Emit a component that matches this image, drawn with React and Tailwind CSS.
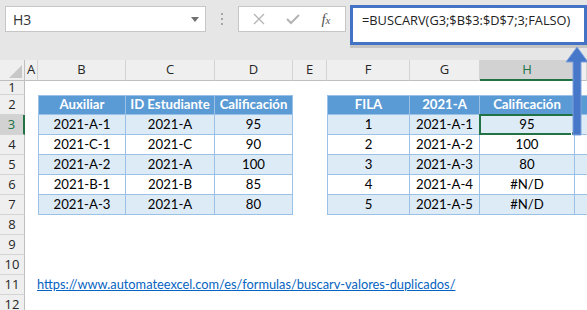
import React from 'react';

const cols = ['A', 'B', 'C', 'D', 'E', 'F', 'G', 'H', ''];

const left = [
  ['2021-A-1', '2021-A', '95'],
  ['2021-C-1', '2021-C', '90'],
  ['2021-A-2', '2021-A', '100'],
  ['2021-B-1', '2021-B', '85'],
  ['2021-A-3', '2021-A', '80'],
];

const right = [
  ['1', '2021-A-1', '95'],
  ['2', '2021-A-2', '100'],
  ['3', '2021-A-3', '80'],
  ['4', '2021-A-4', '#N/D'],
  ['5', '2021-A-5', '#N/D'],
];

const cellFont = { fontFamily: 'Lato, "Open Sans", sans-serif' };
const uiFont = { fontFamily: '"Open Sans", "Noto Sans", sans-serif' };

const RowHead = ({ n, active }) => (
  <div
    style={uiFont}
    className={`flex items-center justify-center text-[13px] border-b border-[#d4d4d4] ${
      active
        ? 'bg-[#d2d2d2] text-[#217346] border-r-2 border-r-[#217346]'
        : 'bg-[#efefef] text-[#262626] border-r border-r-[#bfbfbf]'
    }`}
  >
    {n}
  </div>
);

const Cell = ({ children, head, band, first, top, edge, selected }) => {
  let bg = 'bg-white';
  if (head) bg = 'bg-[#5b9bd5]';
  else if (band) bg = 'bg-[#ddebf7]';
  return (
    <div
      style={cellFont}
      className={`relative flex items-center justify-center whitespace-nowrap text-[13.2px] border-b border-[#9bc2e6] ${
        edge ? '' : 'border-r'
      } ${first ? 'border-l' : ''} ${top ? 'border-t' : ''} ${bg} ${
        head ? 'font-bold text-white' : 'text-black'
      }`}
    >
      {children}
      {selected && (
        <>
          <div className="absolute -left-px -top-px -right-px -bottom-px border-2 border-[#217346]" />
          <div className="absolute -right-[3px] -bottom-[3px] w-[6px] h-[6px] bg-[#217346] border border-white" />
        </>
      )}
    </div>
  );
};

const Empty = () => <div className="bg-white" />;

export default function App() {
  return (
    <div className="relative w-[587px] h-[310px] overflow-hidden bg-white">
      {/* formula bar area */}
      <div className="h-[60px] bg-[#e6e6e6] flex items-start pt-[5px] pl-[5px]">
        <div className="mt-px w-[201px] h-[26px] bg-white border border-[#c6c6c6] flex items-center justify-between pl-[7px] pr-[6px]">
          <span style={uiFont} className="text-[14px] text-[#333]">H3</span>
          <span className="w-0 h-0 border-l-[4px] border-r-[4px] border-t-[5px] border-l-transparent border-r-transparent border-t-[#707070]" />
        </div>
        <div className="w-[32px] h-[26px] mt-px flex flex-col items-center justify-center gap-[3px]">
          <span className="w-[2px] h-[2px] bg-[#a6a6a6]" />
          <span className="w-[2px] h-[2px] bg-[#a6a6a6]" />
          <span className="w-[2px] h-[2px] bg-[#a6a6a6]" />
        </div>
        <div className="mt-px w-[108px] h-[26px] bg-white border border-[#c6c6c6] flex items-center justify-around px-[4px]">
          <svg width="12" height="12" viewBox="0 0 12 12">
            <path d="M1 1 L11 11 M11 1 L1 11" stroke="#b4b4b4" strokeWidth="1.3" />
          </svg>
          <svg width="14" height="12" viewBox="0 0 14 12">
            <path d="M1 6 L5 10 L13 2" stroke="#b4b4b4" strokeWidth="2" fill="none" />
          </svg>
          <span className="italic text-[15px] text-[#555]" style={{ fontFamily: '"Liberation Serif", serif' }}>
            f<span className="text-[11px]">x</span>
          </span>
        </div>
        <div className="ml-[4px] flex-1 h-[40px] bg-white border-[3px] border-[#4472c4] shadow-[0_3px_0_#c4c4c4] flex items-start pt-[3px] pl-[9px]">
          <span style={uiFont} className="text-[12.8px] text-[#222] whitespace-nowrap">
            =BUSCARV(G3;$B$3:$D$7;3;FALSO)
          </span>
        </div>
      </div>

      {/* sheet */}
      <div className="grid grid-cols-[25px_13px_88px_89px_78px_34px_83px_70px_95px_1fr] grid-rows-[21px_14px_repeat(11,20px)]">
        {/* column headers */}
        <div className="bg-[#efefef] border-r border-b border-[#bfbfbf] flex items-end justify-end p-[2px]">
          <svg width="13" height="13" viewBox="0 0 13 13">
            <path d="M13 0 L13 13 L0 13 Z" fill="#c8c8c8" />
          </svg>
        </div>
        {cols.map((c, i) => (
          <div
            key={i}
            style={uiFont}
            className={`flex items-center justify-center text-[13px] ${
              c === 'H'
                ? 'bg-[#d2d2d2] text-[#217346] border-b-2 border-b-[#217346] border-r border-r-[#bfbfbf]'
                : 'bg-[#efefef] text-[#262626] border-b border-b-[#bfbfbf] border-r border-r-[#d4d4d4]'
            }`}
          >
            {c}
          </div>
        ))}

        {/* row 1 */}
        <RowHead n="1" />
        {cols.map((_, i) => <Empty key={i} />)}

        {/* row 2 headers */}
        <RowHead n="2" />
        <Empty />
        <Cell head first top>Auxiliar</Cell>
        <Cell head top>ID Estudiante</Cell>
        <Cell head top>Calificación</Cell>
        <Empty />
        <Cell head first top>FILA</Cell>
        <Cell head top>2021-A</Cell>
        <Cell head top>Calificación</Cell>
        <Cell head top edge />

        {left.map((row, r) => {
          const band = r % 2 === 0;
          return (
            <React.Fragment key={r}>
              <RowHead n={String(r + 3)} active={r === 0} />
              <Empty />
              <Cell band={band} first>{row[0]}</Cell>
              <Cell band={band}>{row[1]}</Cell>
              <Cell band={band}>{row[2]}</Cell>
              <Empty />
              <Cell band={band} first>{right[r][0]}</Cell>
              <Cell band={band}>{right[r][1]}</Cell>
              <Cell band={band} selected={r === 0}>{right[r][2]}</Cell>
              <Cell band={band} edge />
            </React.Fragment>
          );
        })}

        {[8, 9, 10, 11, 12].map((n) => (
          <React.Fragment key={n}>
            <RowHead n={String(n)} />
            <Empty />
            <div className="relative z-10 bg-white flex items-center">
              {n === 11 && (
                <a
                  href="#"
                  style={cellFont}
                  className="-ml-px text-[12.8px] text-[#0563c1] underline whitespace-nowrap"
                >
                  https://www.automateexcel.com/es/formulas/buscarv-valores-duplicados/
                </a>
              )}
            </div>
            {cols.slice(2).map((_, i) => <Empty key={i} />)}
          </React.Fragment>
        ))}
      </div>

      {/* arrow annotation */}
      <svg className="absolute left-[564px] top-[46px]" width="26" height="92" viewBox="0 0 26 92">
        <path
          d="M13 1 L24 16 L17 16 L17 89 L9 89 L9 16 L2 16 Z"
          fill="#4677c8"
          stroke="#7fa2dc"
          strokeWidth="1"
        />
      </svg>
    </div>
  );
}
